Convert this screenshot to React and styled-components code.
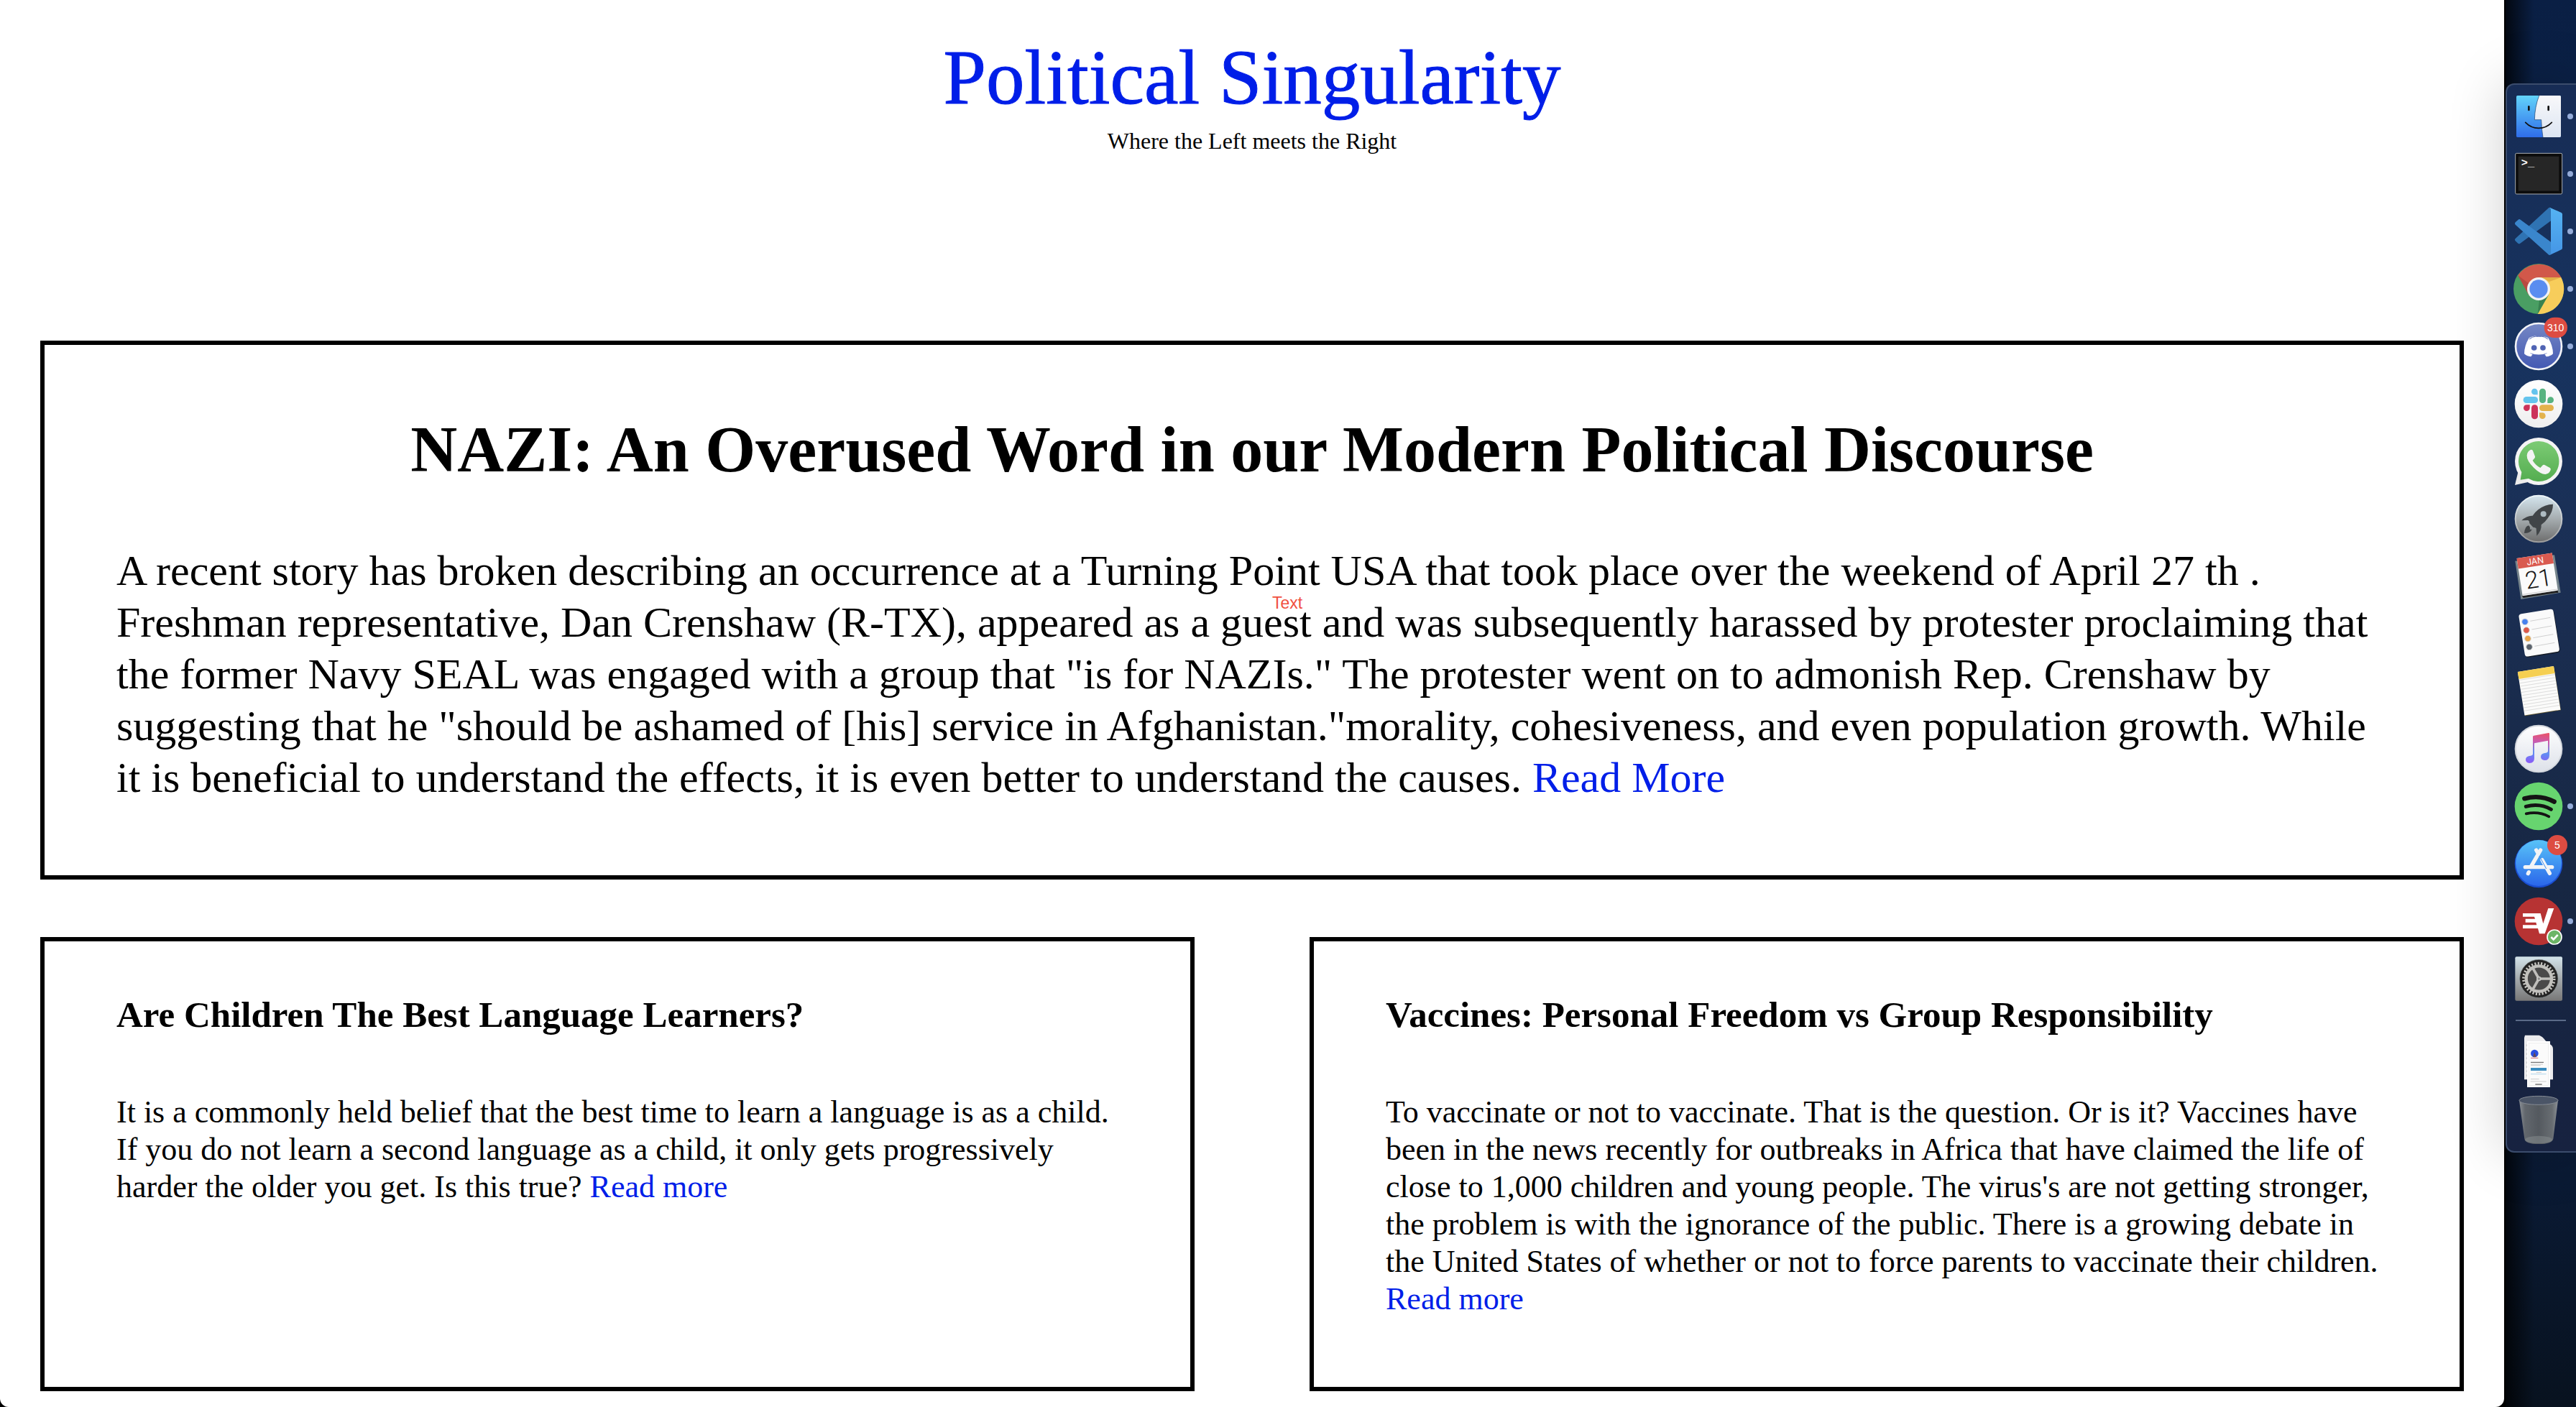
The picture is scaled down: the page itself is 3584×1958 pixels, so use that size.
import React from "react";
import styled, { createGlobalStyle } from "styled-components";

const GlobalStyle = createGlobalStyle`
  * { box-sizing: border-box; }
  body {
    margin: 0;
    background: #000;
    color: #000;
    font-family: "Liberation Serif", "Times New Roman", serif;
  }
`;

const Desktop = styled.div`
  display: grid;
  grid-template-columns: minmax(0, 1fr) 100px;
  min-height: 100vh;
`;

const Page = styled.main`
  padding: 0 56px 22px;
  background: #fff;
  border-radius: 0 0 12px 12px;
`;

const Masthead = styled.header`
  padding-top: 46px;
  margin-bottom: 260px;
  text-align: center;
`;

const SiteTitle = styled.h1`
  margin: 0 0 8px;
  font-size: 107px;
  line-height: 124px;
  font-weight: 400;
  -webkit-text-stroke: 1px #001ee8;
`;

const Tagline = styled.p`
  margin: 0;
  font-size: 32px;
  line-height: 36px;
`;

const Link = styled.a`
  color: #001ee8;
  text-decoration: none;
`;

const Card = styled.article`
  border: 6px solid #000;
  padding: 72px 100px;
`;

const Feature = styled(Card)`
  position: relative;
  margin-bottom: 80px;
  padding-top: 94px;
  padding-bottom: 100px;
`;

const FeatureTitle = styled.h2`
  margin: 0 0 80px;
  font-size: 90px;
  line-height: 104px;
  text-align: center;
`;

const FeatureText = styled.p`
  margin: 0;
  font-size: 60px;
  line-height: 72px;
`;

const Annotation = styled.span`
  position: absolute;
  left: 1708px;
  top: 346px;
  color: #f0503f;
  font: 23px/26px "Liberation Sans", Arial, sans-serif;
`;

const CardRow = styled.section`
  display: grid;
  grid-template-columns: 1fr 1fr;
  gap: 160px;
`;

const StoryCard = styled(Card)`
  min-height: 632px;
`;

const StoryTitle = styled.h3`
  margin: 0 0 80px;
  font-size: 51px;
  line-height: 60px;
`;

const StoryText = styled.p`
  margin: 0;
  font-size: 44px;
  line-height: 52px;
`;

const Side = styled.aside`
  padding-top: 116px;
  border-left: 2px solid #000;
  background:
    linear-gradient(90deg, rgba(0, 0, 0, 0.75), rgba(0, 0, 0, 0) 40px),
    linear-gradient(#0a1f44, #0c2348 20%, #0a1a34 84%, #08121f);
`;

const Dock = styled.nav`
  display: flex;
  flex-direction: column;
  padding: 4px 0;
  border: 2px solid #3b4c6c;
  border-right: 0;
  border-radius: 12px 0 0 12px;
  background: linear-gradient(#172c55, #17335f 25%, #1b2f54 45%, #172743 75%, #172240);
  box-shadow: 0 0 80px rgba(0, 0, 0, 0.2);
`;

const DockButton = styled.button`
  display: block;
  height: 80px;
  padding: 0;
  border: 0;
  background: none;
`;

const Glyph = styled.svg`
  display: block;
  width: 96px;
  height: 80px;
  overflow: visible;
`;

const Divider = styled.hr`
  width: 70px;
  height: 2px;
  margin: 17px 12px;
  border: 0;
  background: #5b6b88;
`;

const SvgText = styled.text`
  font-family: ${(p) => p.$family || '"Inter", sans-serif'};
  font-size: ${(p) => p.$size}px;
  font-weight: ${(p) => p.$weight || 400};
  text-anchor: middle;
`;

function Grad({ id, from, mid, to }) {
  return (
    <defs>
      <linearGradient id={id} x1="0" y1="0" x2="0" y2="1">
        <stop offset="0" stopColor={from} />
        {mid && <stop offset="0.5" stopColor={mid} />}
        <stop offset="1" stopColor={to} />
      </linearGradient>
    </defs>
  );
}

function DockItem({ label, running, children }) {
  return (
    <DockButton type="button" aria-label={label}>
      <Glyph viewBox="0 0 288 240" aria-hidden="true">
        {children}
        {running && <circle cx="264" cy="120" r="12" fill="#94abd8" />}
      </Glyph>
    </DockButton>
  );
}

const Finder = () => (
  <>
    <Grad id="finder" from="#62d3fa" to="#2f6dea" />
    <Grad id="finderFace" from="#f8f8fa" to="#dce5f2" />
    <rect x="39" y="33" width="186" height="174" rx="5" fill="url(#finder)" />
    <path d="M134 33H220q5 0 5 5V202q0 5-5 5H150Q144 170 143 134H115Q116 80 134 33Z" fill="url(#finderFace)" />
    <path d="M134 33Q116 80 115 134H143Q144 170 150 207" fill="none" stroke="#1b3f6a" strokeWidth="2" />
    <path d="M91 79V93M173 79V93" stroke="#111" strokeWidth="8" strokeLinecap="round" />
    <path d="M77 145Q100 169 132 169T187 145" fill="none" stroke="#111" strokeWidth="5" strokeLinecap="round" />
  </>
);

const Terminal = () => (
  <>
    <rect x="35" y="34" width="195" height="170" rx="5" fill="#0b0b0b" stroke="#a9adb0" strokeWidth="3" />
    <rect x="47" y="47" width="170" height="144" fill="#262626" />
    <SvgText x="87" y="87" $size={46} $weight={700} $family='"Liberation Mono", monospace' fill="#fff">{">_"}</SvgText>
  </>
);

const VSCode = () => (
  <>
    <Grad id="vsc" from="#55b3f2" to="#4596e6" />
    <path d="M174 22Q178 19 183 22V76L55 170Q51 174 46 170L35 160Q30 155 35 150Z" fill="#2f73b3" />
    <path d="M35 82L47 71Q51 67 56 71L183 164V215Q178 222 173 217L35 92Q30 87 35 82Z" fill="#3a86cc" />
    <path d="M178 20L227 42Q231 44 231 49V190Q231 194 227 196L178 219Q183 216 183 210V29Q183 24 178 20Z" fill="url(#vsc)" />
  </>
);

const Chrome = () => (
  <>
    <circle cx="132" cy="120" r="105" fill="#4a9e63" />
    <path d="M46 64A105 105 0 0 1 226 72H132L90 144Z" fill="#d1584a" />
    <path d="M226 72A105 105 0 0 1 128 225L174 144L132 72Z" fill="#f7cd5b" />
    <path d="M46 64L90 144L92 98Z" fill="#a9413a" opacity="0.6" />
    <path d="M226 72H145L176 90Z" fill="#d69c3e" opacity="0.6" />
    <path d="M128 225L174 144L135 167Z" fill="#2f7547" opacity="0.7" />
    <circle cx="132" cy="120" r="48" fill="#f3f3f3" />
    <circle cx="132" cy="120" r="38" fill="#5a8df0" />
  </>
);

const Discord = () => (
  <>
    <Grad id="discord" from="#7587c4" to="#4359b3" />
    <circle cx="132" cy="120" r="96" fill="url(#discord)" stroke="#f2f3f7" strokeWidth="8" />
    <path d="M92 85Q110 75 121 77L122 81Q132 79 142 81L145 77Q158 77 172 85Q192 118 192 151Q181 162 164 163L157 153Q164 151 169 147Q133 162 95 147Q100 151 107 153L100 163Q82 161 72 151Q72 118 92 85Z" fill="#fff" />
    <path d="M93 90Q106 79 121 78M171 90Q158 79 143 78" fill="none" stroke="#5267b4" strokeWidth="3" />
    <circle cx="113" cy="126" r="11.500" fill="#5064b4" />
    <circle cx="150" cy="126" r="11.500" fill="#5064b4" />
    <rect x="155" y="-1" width="97" height="85" rx="42" fill="#dd4c42" />
    <SvgText x="203" y="57" $size={42} $family='"Liberation Sans", Arial, sans-serif' fill="#fff">310</SvgText>
  </>
);

const Slack = () => (
  <>
    <Grad id="slack" from="#ffffff" to="#eeeeee" />
    <circle cx="132" cy="120" r="100" fill="url(#slack)" />
    <g fill="#64c4ed">
      <path d="M128 82H115A13 13 0 1 1 128 69Z" />
      <rect x="68" y="90" width="61" height="27" rx="13" />
    </g>
    <g fill="#58b381">
      <rect x="135" y="56" width="27" height="61" rx="13" />
      <path d="M169 117V104A13 13 0 1 1 182 117Z" />
    </g>
    <g fill="#cc325a">
      <path d="M95 124V137A13 13 0 1 1 82 124Z" />
      <rect x="102" y="124" width="27" height="60" rx="13" />
    </g>
    <g fill="#e3b24c">
      <rect x="135" y="124" width="60" height="26" rx="13" />
      <path d="M135 157H148A13 13 0 1 1 135 170Z" />
    </g>
  </>
);

const WhatsApp = () => (
  <>
    <Grad id="wa" from="#7ccb74" to="#54ad50" />
    <circle cx="132" cy="120" r="99" fill="#f4f4f4" />
    <path d="M33 219L46 166L87 207Z" fill="#ececec" />
    <path d="M132 36A84 84 0 1 1 90 192L56 197L61 165A84 84 0 0 1 132 36Z" fill="url(#wa)" />
    <path d="M98 72q8-2 10 4l9 24q1 5-3 8l-7 8q12 20 32 31l9-10q4-4 9-2l22 12q5 3 3 9q-5 16-22 18q-20 0-48-27q-30-30-29-52q2-17 15-23z" fill="#f4f4f4" />
  </>
);

const Launchpad = () => (
  <>
    <Grad id="launch" from="#d4e5ee" mid="#a6adb0" to="#6d6d6d" />
    <Grad id="launchRim" from="#eef7fb" to="#9c9c9c" />
    <circle cx="132" cy="120" r="97" fill="url(#launch)" stroke="url(#launchRim)" strokeWidth="6" />
    <path d="M192 59Q158 59 130 82Q117 92 107 107Q82 106 61 127L88 126Q94 129 94 139L109 155Q118 155 122 160L124 191Q145 170 143 145Q160 133 171 116Q192 90 192 59Z" fill="#414548" />
    <circle cx="152" cy="100" r="12" fill="#aebbc2" />
    <path d="M90 148Q75 150 72 180Q98 180 104 164L95 164Q99 156 90 148Z" fill="#414548" />
  </>
);

const Calendar = () => (
  <>
    <path d="M34 56L198 31L224 188L58 216Z" fill="#76858c" />
    <path d="M62 202L212 179L214 188L68 210Z" fill="#222" />
    <g transform="translate(126 112) rotate(-8.800)">
      <rect x="-74" y="-79" width="149" height="158" fill="#fbfbfb" />
      <rect x="-74" y="-79" width="149" height="44" fill="#d95a50" />
      <path d="M-74 74H75" stroke="#c9c9c9" strokeWidth="3" />
      <SvgText x="0" y="-44" $size={36} fill="#fff">JAN</SvgText>
      <SvgText x="2" y="54" $size={100} $weight={300} $family='"Roboto", sans-serif' fill="#161616">21</SvgText>
    </g>
  </>
);

const REMINDERS = ["#4781ee", "#dc5848", "#e6a348", "#5b636c"];

const Reminders = () => (
  <>
    <g transform="translate(134 116) rotate(-9)">
      <rect x="-71" y="-86" width="146" height="180" rx="12" fill="#141a24" />
      <rect x="-73" y="-90" width="146" height="180" rx="12" fill="#fafafa" />
    </g>
    {REMINDERS.map((color, i) => (
      <g key={color} transform={`translate(${i * 6} ${i * 35})`}>
        <circle cx="75" cy="70" r="13" fill={color} stroke="#dcdcdc" strokeWidth="3" />
        <path d="M97 67L181 52" stroke="#b9b9b9" strokeWidth="2" />
      </g>
    ))}
  </>
);

const Notes = () => (
  <g transform="translate(134 118) rotate(-9)">
    <rect x="-75" y="-90" width="152" height="184" fill="#6d5d2a" />
    <rect x="-76" y="-92" width="152" height="184" fill="#fbfbfa" />
    <rect x="-76" y="-92" width="152" height="30" fill="#f5cf52" />
    {[0, 1, 2, 3, 4, 5, 6, 7, 8, 9, 10].map((n) => (
      <path key={n} d={`M-74 ${-57 + n * 13}H74`} stroke="#cfcfcf" strokeWidth="2" />
    ))}
  </g>
);

const Music = () => (
  <>
    <Grad id="music" from="#ffffff" to="#dde1e9" />
    <defs>
      <linearGradient id="note" gradientUnits="userSpaceOnUse" x1="140" y1="54" x2="128" y2="180">
        <stop offset="0" stopColor="#e9536b" />
        <stop offset="0.3" stopColor="#c95bb0" />
        <stop offset="0.65" stopColor="#5f8ff2" />
        <stop offset="1" stopColor="#8a5cf6" />
      </linearGradient>
    </defs>
    <circle cx="132" cy="120" r="97" fill="url(#music)" stroke="#d3d7dd" strokeWidth="6" />
    <path d="M108 70Q108 66 112 65L173 54Q177 53 177 58V146Q177 168 157 168Q141 167 141 153Q141 141 157 138Q171 137 171 130V86L114 97V160Q114 180 94 180Q78 179 78 165Q78 153 93 150Q108 149 108 142Z" fill="url(#note)" />
  </>
);

const Spotify = () => (
  <>
    <circle cx="132" cy="120" r="100" fill="#67d46f" />
    <g fill="none" stroke="#141414" strokeLinecap="round">
      <path d="M73 88Q139 70 197 101" strokeWidth="19" />
      <path d="M79 121Q137 106 184 133" strokeWidth="15" />
      <path d="M80 151Q132 140 175 163" strokeWidth="11" />
    </g>
  </>
);

const AppStore = () => (
  <>
    <Grad id="store" from="#58c3f8" to="#2a66ea" />
    <circle cx="132" cy="120" r="100" fill="#1a4dd0" />
    <circle cx="132" cy="117" r="96" fill="url(#store)" />
    <g stroke="#f3f4f6" strokeWidth="16" strokeLinecap="round">
      <path d="M140 63L99 134M91 155L88 161M122 63L130 77M147 104L178 160M76 134H188" />
    </g>
    <path d="M135 88L164 141" stroke="#3c8df0" strokeWidth="3" />
    <circle cx="210" cy="42" r="42" fill="#dd4c42" />
    <SvgText x="210" y="57" $size={42} $family='"Liberation Sans", Arial, sans-serif' fill="#fff">5</SvgText>
  </>
);

const Vpn = () => (
  <>
    <circle cx="132" cy="120" r="100" fill="#b73333" />
    <path d="M66 87H140L151 130L172 66H196L158 172H135L129 150H66V136H124L121 125H77V110H117L114 101H66Z" fill="#fff" />
    <circle cx="198" cy="186" r="30" fill="#6cb567" stroke="#fff" strokeWidth="5" />
    <path d="M184 186L194 196L212 177" fill="none" stroke="#fff" strokeWidth="8" />
  </>
);

const Settings = () => (
  <>
    <Grad id="prefs" from="#d3e3ea" mid="#a5abae" to="#777777" />
    <rect x="34" y="28" width="197" height="184" rx="6" fill="url(#prefs)" />
    <circle cx="133" cy="120" r="80" fill="#242424" stroke="#8f989c" strokeWidth="2" />
    <circle cx="133" cy="120" r="64" fill="none" stroke="#c9c8c4" strokeWidth="11" strokeDasharray="6.400 7" />
    <circle cx="133" cy="120" r="53" fill="#4a4a4a" stroke="#c2c1bd" strokeWidth="13" />
    <path d="M133 120H184M133 120L108 76M133 120L108 164" stroke="#bfbebb" strokeWidth="11" />
    <circle cx="133" cy="120" r="10" fill="#c9c9c6" />
    <circle cx="133" cy="120" r="5" fill="#8c8c8c" />
  </>
);

const Documents = () => (
  <>
    <path d="M75 8H134Q150 14 160 30L180 46Q192 52 192 66V193H72V19Z" fill="#ececee" />
    <path d="M82 46V180" stroke="#b0b0b0" strokeWidth="2" strokeDasharray="8 10" />
    <rect x="84" y="33" width="96" height="192" fill="#fff" />
    <rect x="92" y="41" width="80" height="177" fill="#fbfbfb" stroke="#cfcfcf" strokeWidth="1" />
    <circle cx="115" cy="84" r="16" fill="#2b4fe0" />
    <path d="M108 98L115 78L122 98Z" fill="#6b4a52" />
    <path d="M99 103H130" stroke="#d56a70" strokeWidth="3" />
    <path d="M99 121H153" stroke="#555" strokeWidth="3" />
    <path d="M99 129H150M99 134H140M122 163H144M99 191H134M98 201H164" stroke="#b5b5b5" strokeWidth="2" />
    <rect x="99" y="144" width="66" height="12" fill="#3a8cc0" />
    <path d="M99 170H164" stroke="#8cc4e6" strokeWidth="2" />
    <path d="M118 213H146" stroke="#333" strokeWidth="3" />
  </>
);

const Trash = () => (
  <>
    <defs>
      <linearGradient id="bin">
        <stop offset="0" stopColor="#8b9096" />
        <stop offset="0.15" stopColor="#62676d" />
        <stop offset="0.5" stopColor="#54595f" />
        <stop offset="0.85" stopColor="#686d72" />
        <stop offset="1" stopColor="#8b9096" />
      </linearGradient>
    </defs>
    <path d="M51 40L73 200Q76 222 132 222T193 200L213 40Z" fill="url(#bin)" />
    <ellipse cx="132" cy="204" rx="57" ry="16" fill="#8a8f92" opacity="0.5" />
    <ellipse cx="132" cy="40" rx="81" ry="18" fill="#4b5567" stroke="#868c95" strokeWidth="3" />
  </>
);

const APPS = [
  ["Finder", Finder, true],
  ["Terminal", Terminal, true],
  ["Visual Studio Code", VSCode, true],
  ["Chrome", Chrome, true],
  ["Discord", Discord, true],
  ["Slack", Slack],
  ["WhatsApp", WhatsApp],
  ["Launchpad", Launchpad],
  ["Calendar", Calendar],
  ["Reminders", Reminders],
  ["Notes", Notes],
  ["iTunes", Music],
  ["Spotify", Spotify, true],
  ["App Store", AppStore],
  ["ExpressVPN", Vpn, true],
  ["System Preferences", Settings],
];

export default function App() {
  return (
    <Desktop>
      <GlobalStyle />
      <Page>
        <Masthead>
          <SiteTitle>
            <Link href="#home">Political Singularity</Link>
          </SiteTitle>
          <Tagline>Where the Left meets the Right</Tagline>
        </Masthead>

        <Feature>
          <FeatureTitle>NAZI: An Overused Word in our Modern Political Discourse</FeatureTitle>
          <FeatureText>
            A recent story has broken describing an occurrence at a Turning Point USA that took place over the
            weekend of April 27 th . Freshman representative, Dan Crenshaw (R-TX), appeared as a guest and was
            subsequently harassed by protester proclaiming that the former Navy SEAL was engaged with a group
            that "is for NAZIs." The protester went on to admonish Rep. Crenshaw by suggesting that he "should
            be ashamed of [his] service in Afghanistan."morality, cohesiveness, and even population growth.
            While it is beneficial to understand the effects, it is even better to understand the causes.{" "}
            <Link href="#feature">Read More</Link>
          </FeatureText>
          <Annotation>Text</Annotation>
        </Feature>

        <CardRow>
          <StoryCard>
            <StoryTitle>Are Children The Best Language Learners?</StoryTitle>
            <StoryText>
              It is a commonly held belief that the best time to learn a language is as a child. If you do not
              learn a second language as a child, it only gets progressively harder the older you get. Is this
              true? <Link href="#language">Read more</Link>
            </StoryText>
          </StoryCard>
          <StoryCard>
            <StoryTitle>Vaccines: Personal Freedom vs Group Responsibility</StoryTitle>
            <StoryText>
              To vaccinate or not to vaccinate. That is the question. Or is it? Vaccines have been in the news
              recently for outbreaks in Africa that have claimed the life of close to 1,000 children and young
              people. The virus's are not getting stronger, the problem is with the ignorance of the public.
              There is a growing debate in the United States of whether or not to force parents to vaccinate
              their children. <Link href="#vaccines">Read more</Link>
            </StoryText>
          </StoryCard>
        </CardRow>
      </Page>

      <Side>
        <Dock aria-label="Dock">
          {APPS.map(([label, Icon, running]) => (
            <DockItem key={label} label={label} running={running}>
              <Icon />
            </DockItem>
          ))}
          <Divider />
          <DockItem label="Documents">
            <Documents />
          </DockItem>
          <DockItem label="Trash">
            <Trash />
          </DockItem>
        </Dock>
      </Side>
    </Desktop>
  );
}
